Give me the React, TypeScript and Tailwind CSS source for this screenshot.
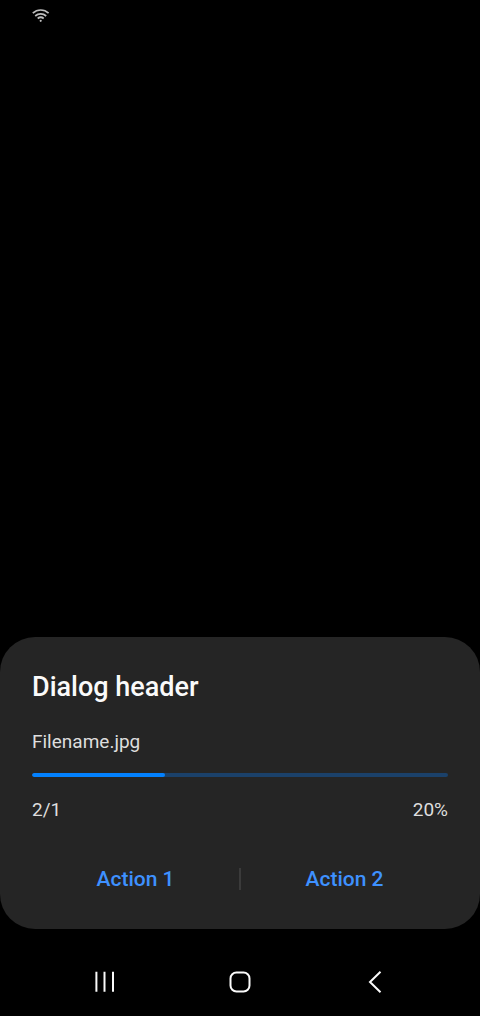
const PROGRESS = 32;

function StatusBar() {
  return (
    <header className="flex h-[30px] items-center px-8">
      <svg width="18" height="14" viewBox="0 0 18 14" fill="none" stroke="#bdbdbd" strokeWidth="1.7" aria-label="Wi-Fi">
        <path d="M0.8 5.2C5.3 0.9 12.1 0.9 16.6 5.2" />
        <path d="M3.2 8C6.4 5.1 11 5.1 14.2 8" />
        <path d="M5.7 10.500C7.5 9 9.9 9 11.7 10.500" />
        <circle cx="8.7" cy="12.8" r="1.1" fill="#bdbdbd" stroke="none" />
      </svg>
    </header>
  );
}

function ProgressDialog() {
  return (
    <section
      role="dialog"
      aria-labelledby="dialog-title"
      className="rounded-[35px] bg-[#252525] px-8 pt-8 pb-6 text-[19px] leading-[26px] text-[#dedede]"
    >
      <h1 id="dialog-title" className="text-[27px] leading-9 font-medium text-[#fafafa]">
        Dialog header
      </h1>
      <p className="mt-6">Filename.jpg</p>
      <div
        role="progressbar"
        aria-label="Filename.jpg"
        aria-valuenow={PROGRESS}
        className="mt-[18px] h-1 overflow-hidden rounded-full bg-[#1b416a]"
      >
        <div className="h-full rounded-full bg-[#0381fe]" style={{ width: `${PROGRESS}%` }} />
      </div>
      <div className="mt-5 flex justify-between">
        <span>2/1</span>
        <span>20%</span>
      </div>
      <div className="mt-[30px] flex items-center text-[21px] font-medium text-[#3e91ff]">
        <button type="button" className="h-13 flex-1">Action 1</button>
        <span className="h-[22px] w-0.5 bg-[#3b3b3b]" />
        <button type="button" className="h-13 flex-1">Action 2</button>
      </div>
    </section>
  );
}

function NavigationBar() {
  return (
    <nav className="flex h-[87px] items-center justify-center gap-[111px] pt-[18px]">
      <button type="button" aria-label="Recent apps">
        <svg width="24" height="24" viewBox="0 0 24 24" fill="none" stroke="#fafafa" strokeWidth="2">
          <path d="M3.4 1.8v20M11.500 1.8v20M20 1.8v20" />
        </svg>
      </button>
      <button type="button" aria-label="Home">
        <svg width="24" height="24" viewBox="0 0 24 24" fill="none" stroke="#fafafa" strokeWidth="2">
          <rect x="2.5" y="2.5" width="19" height="19" rx="6" />
        </svg>
      </button>
      <button type="button" aria-label="Back">
        <svg width="24" height="24" viewBox="0 0 24 24" fill="none" stroke="#fafafa" strokeWidth="2">
          <path d="M17.5 1.8L7 12l10.500 10.200" />
        </svg>
      </button>
    </nav>
  );
}

export default function App() {
  return (
    <div className="flex min-h-screen flex-col bg-black font-['Roboto',sans-serif]">
      <StatusBar />
      <main className="flex flex-1 flex-col justify-end">
        <ProgressDialog />
      </main>
      <NavigationBar />
    </div>
  );
}
